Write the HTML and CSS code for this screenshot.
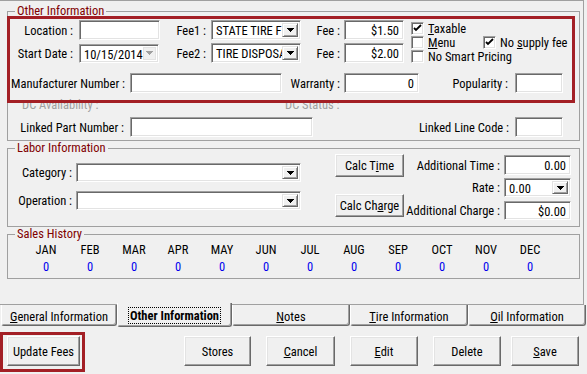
FILE: index.html
```html
<!DOCTYPE html>
<html>
<head>
    <title>Part Information</title>
    <link rel="stylesheet" href="styles.css">
</head>
<body>
    <div class="page">
        <!-- Other Information -->
        <fieldset class="group">
            <legend>Other Information</legend>
            <div class="other-body">
                <div class="top-block">
                    <div class="top-fields">
                        <div class="row r1">
                            <span class="lbl w71">Location :</span>
                            <span class="edit w81"></span>
                            <span class="lbl w51 pr5">Fee1 :</span>
                            <span class="combo w90"><span class="text">STATE TIRE FEE</span><span class="drop"><svg width="7" height="4" viewBox="0 0 7 4"><path d="M0 0h7v1H0zM1 1h5v1H1zM2 2h3v1H2zM3 3h1v1H3z"/></svg></span></span>
                            <span class="lbl w43 pr4">Fee :</span>
                            <span class="edit w60 num">$1.50</span>
                        </div>
                        <div class="row r2">
                            <span class="lbl w71">Start Date :</span>
                            <span class="combo date w80"><span class="text">10/15/2014</span><span class="drop off"><svg width="7" height="4" viewBox="0 0 7 4"><path d="M0 0h7v1H0zM1 1h5v1H1zM2 2h3v1H2zM3 3h1v1H3z"/></svg></span></span>
                            <span class="lbl w52 pr5">Fee2 :</span>
                            <span class="combo w90"><span class="text">TIRE DISPOSAL</span><span class="drop"><svg width="7" height="4" viewBox="0 0 7 4"><path d="M0 0h7v1H0zM1 1h5v1H1zM2 2h3v1H2zM3 3h1v1H3z"/></svg></span></span>
                            <span class="lbl w43 pr4">Fee :</span>
                            <span class="edit w60 num">$2.00</span>
                        </div>
                    </div>
                    <div class="checks">
                        <label class="chk"><span class="box"><svg width="9" height="9" viewBox="0 0 9 9"><path d="M1 4l2 2 5-5" fill="none" stroke="#000" stroke-width="1.8"/></svg></span><span><u>T</u>axable</span></label>
                        <div class="chk-row">
                            <label class="chk w72"><span class="box"></span><span><u>M</u>enu</span></label>
                            <label class="chk"><span class="box"><svg width="9" height="9" viewBox="0 0 9 9"><path d="M1 4l2 2 5-5" fill="none" stroke="#000" stroke-width="1.8"/></svg></span><span>No <u>s</u>upply fee</span></label>
                        </div>
                        <label class="chk"><span class="box"></span><span>No Smart Pricing</span></label>
                    </div>
                </div>
                <div class="row r3">
                    <span class="lbl w122 pr5">Manufacturer Number :</span>
                    <span class="edit w152"></span>
                    <span class="lbl w62 pr4">Warranty :</span>
                    <span class="edit w75 num">0</span>
                    <span class="lbl w96 pr7">Popularity :</span>
                    <span class="edit w48"></span>
                </div>
                <div class="row dc">
                    <span class="dis w277">DC Availability :</span>
                    <span class="dis">DC Status :</span>
                </div>
                <div class="row r4">
                    <span class="lbl w122">Linked Part Number :</span>
                    <span class="edit w183"></span>
                    <span class="lbl w202">Linked Line Code :</span>
                    <span class="edit w48"></span>
                </div>
            </div>
        </fieldset>

        <!-- Labor Information -->
        <fieldset class="group">
            <legend>Labor Information</legend>
            <div class="labor-body">
                <div class="labor-left">
                    <div class="row">
                        <span class="lbl w68 pr4">Category :</span>
                        <span class="combo w225"><span class="text"></span><span class="drop"><svg width="7" height="4" viewBox="0 0 7 4"><path d="M0 0h7v1H0zM1 1h5v1H1zM2 2h3v1H2zM3 3h1v1H3z"/></svg></span></span>
                    </div>
                    <div class="row">
                        <span class="lbl w68 pr4">Operation :</span>
                        <span class="combo w225"><span class="text"></span><span class="drop"><svg width="7" height="4" viewBox="0 0 7 4"><path d="M0 0h7v1H0zM1 1h5v1H1zM2 2h3v1H2zM3 3h1v1H3z"/></svg></span></span>
                    </div>
                </div>
                <div class="labor-mid">
                    <button class="btn calc">Calc T<u>i</u>me</button>
                    <button class="btn calc">Calc Ch<u>a</u>rge</button>
                </div>
                <div class="labor-right">
                    <div class="row">
                        <span class="lbl w100 pr4">Additional Time :</span>
                        <span class="edit w67 num">0.00</span>
                    </div>
                    <div class="row">
                        <span class="lbl w100 pr4">Rate :</span>
                        <span class="combo w67"><span class="text">0.00</span><span class="drop"><svg width="7" height="4" viewBox="0 0 7 4"><path d="M0 0h7v1H0zM1 1h5v1H1zM2 2h3v1H2zM3 3h1v1H3z"/></svg></span></span>
                    </div>
                    <div class="row">
                        <span class="lbl w100 pr4">Additional Charge :</span>
                        <span class="edit w67 num">$0.00</span>
                    </div>
                </div>
            </div>
        </fieldset>

        <!-- Sales History -->
        <fieldset class="group">
            <legend>Sales History</legend>
            <div class="sales-body">
                <div class="month"><span>JAN</span><span class="qty">0</span></div>
                <div class="month"><span>FEB</span><span class="qty">0</span></div>
                <div class="month"><span>MAR</span><span class="qty">0</span></div>
                <div class="month"><span>APR</span><span class="qty">0</span></div>
                <div class="month"><span>MAY</span><span class="qty">0</span></div>
                <div class="month"><span>JUN</span><span class="qty">0</span></div>
                <div class="month"><span>JUL</span><span class="qty">0</span></div>
                <div class="month"><span>AUG</span><span class="qty">0</span></div>
                <div class="month"><span>SEP</span><span class="qty">0</span></div>
                <div class="month"><span>OCT</span><span class="qty">0</span></div>
                <div class="month"><span>NOV</span><span class="qty">0</span></div>
                <div class="month"><span>DEC</span><span class="qty">0</span></div>
            </div>
        </fieldset>

        <!-- highlight around the fee fields -->
        <div class="mark mark-fees"></div>
    </div>

    <div class="tabs">
        <div class="tab t-general"><u>G</u>eneral Information</div>
        <div class="tab t-other active"><span class="focus">Other Information</span></div>
        <div class="tab t-wide"><u>N</u>otes</div>
        <div class="tab t-wide"><u>T</u>ire Information</div>
        <div class="tab t-wide"><u>O</u>il Information</div>
    </div>

    <div class="actions">
        <div class="mark-btn">
            <button class="btn w73">Update Fees</button>
        </div>
        <button class="btn b-stores">Stores</button>
        <button class="btn b-cancel"><u>C</u>ancel</button>
        <button class="btn b-edit"><u>E</u>dit</button>
        <button class="btn b-delete">Delete</button>
        <button class="btn b-save"><u>S</u>ave</button>
    </div>
</body>
</html>
```

FILE: styles.css
```css
* {
    box-sizing: border-box;
}
body {
    margin: 0;
    width: 587px;
    height: 374px;
    overflow: hidden;
    background: #f0f0f0;
    font-family: "Roboto Condensed", "Liberation Sans", Arial, sans-serif;
    font-size: 12.5px;
    color: #000;
}
u {
    text-decoration: underline;
    text-underline-offset: 1px;
}

/* tab page */
.page {
    position: relative;
    width: 584px;
    height: 305px;
    border-top: 1px solid #a0a0a0;
    border-right: 1px solid #a0a0a0;
    border-bottom: 1px solid #a0a0a0;
    padding-top: 4px;
}
.group {
    margin: 0 0 0 7px;
    padding: 0;
    width: 573px;
    min-width: 0;
    border: 1px solid #a0a0a0;
}
.group + .group {
    margin-top: 1px;
}
.group legend {
    margin-left: 7px;
    padding: 0 2px;
    height: 12px;
    line-height: 12px;
    color: #800000;
}

.row {
    display: flex;
    align-items: center;
    height: 20px;
}
.lbl {
    text-align: right;
    padding-right: 6px;
    white-space: nowrap;
    flex: none;
}
.pr4 { padding-right: 4px; }
.pr5 { padding-right: 5px; }
.pr7 { padding-right: 7px; }

.w43 { width: 43px; }
.w48 { width: 48px; }
.w51 { width: 51px; }
.w52 { width: 52px; }
.w60 { width: 60px; }
.w62 { width: 62px; }
.w67 { width: 67px; }
.w68 { width: 68px; }
.w71 { width: 71px; }
.w72 { width: 72px; }
.w73 { width: 73px; }
.w75 { width: 75px; }
.w80 { width: 80px; }
.w81 { width: 81px; }
.w90 { width: 90px; }
.w96 { width: 96px; }
.w100 { width: 100px; }
.w122 { width: 122px; }
.w152 { width: 152px; }
.w183 { width: 183px; }
.w202 { width: 202px; }
.w225 { width: 225px; }
.w277 { width: 277px; }

/* sunken edit box */
.edit,
.combo,
.box {
    flex: none;
    background: #fff;
    border-top: 1px solid #a0a0a0;
    border-left: 1px solid #a0a0a0;
    border-right: 1px solid #fff;
    border-bottom: 1px solid #fff;
    box-shadow: inset 1px 1px #696969, inset -1px -1px #e3e3e3;
}
.edit {
    height: 20px;
    padding: 2px 4px 0;
    line-height: 15px;
    white-space: nowrap;
}
.num {
    text-align: right;
}
.combo {
    display: flex;
    height: 20px;
    padding: 2px;
}
.combo .text {
    flex: 1;
    min-width: 0;
    overflow: hidden;
    white-space: nowrap;
    padding-left: 2px;
    line-height: 15px;
}
.drop {
    flex: none;
    width: 16px;
    display: flex;
    align-items: center;
    justify-content: center;
    background: #f0f0f0;
    border-top: 1px solid #e3e3e3;
    border-left: 1px solid #e3e3e3;
    border-right: 1px solid #696969;
    border-bottom: 1px solid #696969;
    box-shadow: inset 1px 1px #fff, inset -1px -1px #a0a0a0;
}
.drop svg {
    display: block;
}
.drop.off {
    background: #f0f0f0;
    border-color: #e3e3e3;
    box-shadow: none;
    width: 13px;
}
.drop.off svg {
    fill: #a0a0a0;
}
.date {
    height: 19px;
}

/* other information */
.other-body {
    height: 123px;
}
.top-block {
    display: flex;
}
.top-fields .row {
    margin-top: 3px;
}
.checks {
    margin-left: 7px;
    margin-top: 4px;
}
.chk-row {
    display: flex;
}
.chk {
    display: flex;
    align-items: center;
    height: 14px;
    white-space: nowrap;
}
.box {
    width: 13px;
    height: 13px;
    margin-right: 4px;
    display: flex;
    align-items: center;
    justify-content: center;
}
.box svg {
    display: block;
}
.r3 {
    margin-top: 10px;
}
.dc {
    margin-top: 4px;
    height: 14px;
}
.dis {
    color: #a0a0a0;
    padding-left: 14px;
    flex: none;
}
.dis + .dis {
    padding-left: 0;
}
.r4 {
    margin-top: 6px;
}

/* labor information */
.labor-body {
    display: flex;
    height: 72px;
}
.labor-left {
    padding-top: 9px;
}
.labor-left .row {
    height: 19px;
}
.labor-left .row + .row {
    margin-top: 9px;
}
.labor-left .combo {
    height: 19px;
}
.labor-mid {
    margin-left: 34px;
    display: flex;
    flex-direction: column;
    gap: 17px;
}
.labor-right .row {
    height: 19px;
    margin-top: 4px;
}
.labor-right .row:first-child {
    height: 20px;
    margin-top: 1px;
}
.labor-right .row:nth-child(2) {
    margin-top: 3px;
}
.labor-right .edit,
.labor-right .combo {
    height: 19px;
}
.labor-right .row:first-child .edit {
    height: 20px;
}

/* buttons */
.btn {
    flex: none;
    font: inherit;
    color: #000;
    background: #f0f0f0;
    height: 30px;
    padding: 0;
    white-space: nowrap;
    border-top: 1px solid #fff;
    border-left: 1px solid #fff;
    border-right: 1px solid #696969;
    border-bottom: 1px solid #696969;
    box-shadow: inset -1px -1px #a0a0a0, inset 1px 1px #e3e3e3;
    text-align: center;
}
.calc {
    width: 69px;
    height: 23px;
}

/* sales history */
.sales-body {
    height: 38px;
    display: flex;
    padding-left: 16px;
    padding-top: 3px;
}
.month {
    width: 44px;
    display: flex;
    flex-direction: column;
    align-items: center;
    line-height: 14px;
}
.month .qty {
    margin-top: 3px;
    color: #0000ee;
}

/* red highlight marks */
.mark {
    position: absolute;
    border: 3px solid #a31f25;
    pointer-events: none;
}
.mark-fees {
    left: 7px;
    top: 15px;
    width: 568px;
    height: 87px;
}

/* tabs along the bottom */
.tabs {
    display: flex;
    padding-left: 1px;
    height: 22px;
}
.tab {
    height: 21px;
    padding-top: 2px;
    line-height: 19px;
    text-align: center;
    white-space: nowrap;
    border-left: 1px solid #fff;
    border-right: 1px solid #696969;
    border-bottom: 1px solid #696969;
    border-radius: 0 0 3px 3px;
    box-shadow: inset -1px -1px #a0a0a0;
}
.t-general { width: 116px; }
.t-other { width: 115px; }
.t-wide { width: 118px; }
.tab.active {
    position: relative;
    margin-top: -2px;
    height: 24px;
    padding-top: 4px;
    line-height: 18px;
    background: #f0f0f0;
    font-weight: bold;
}
.focus {
    border: 1px dotted #000;
    padding: 0 1px;
}

/* action buttons */
.actions {
    display: flex;
    align-items: flex-start;
    padding-top: 5px;
}
.mark-btn {
    border: 3px solid #a31f25;
    padding: 1px 2px 3px 4px;
}
.actions > .btn {
    margin-top: 4px;
    width: 68px;
}
.b-stores { margin-left: 99px; width: 67px !important; }
.b-cancel { margin-left: 15px; width: 69px !important; }
.b-edit { margin-left: 15px; }
.b-delete { margin-left: 15px; }
.b-save { margin-left: 10px; }
```
